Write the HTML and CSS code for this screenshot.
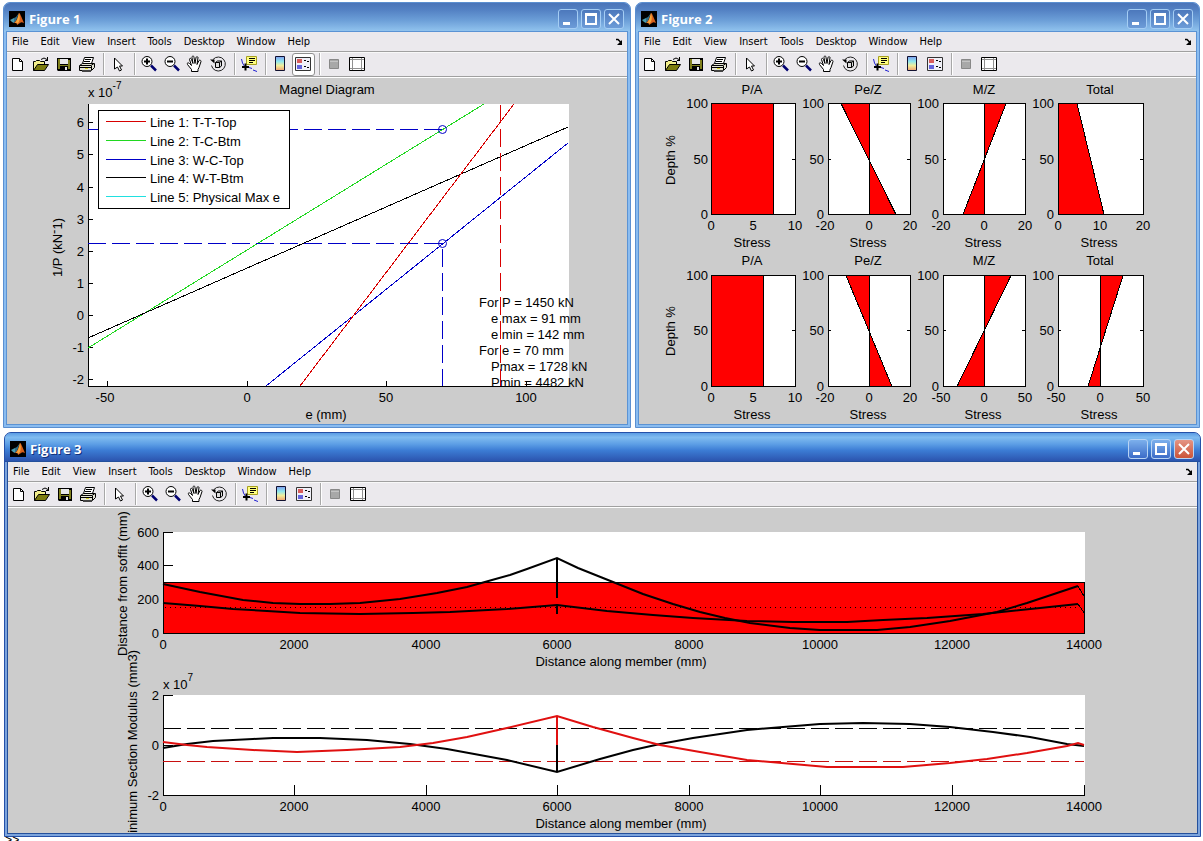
FILE: index.html
```html
<!DOCTYPE html>
<html lang="en">
<head>
  <meta charset="UTF-8">
  <meta name="viewport" content="width=device-width, initial-scale=1.0">
  <title>Figures</title>
  <link rel="stylesheet" href="styles.css">
</head>
<body>
  <!-- shared icons -->
  <svg class="defs" width="0" height="0" aria-hidden="true">
    <linearGradient id="jet" x1="0" y1="0" x2="0" y2="1">
      <stop offset="0" stop-color="#7d9cf0"/><stop offset="0.35" stop-color="#8fe6ee"/>
      <stop offset="0.65" stop-color="#f2ee9a"/><stop offset="1" stop-color="#f0a070"/>
    </linearGradient>
    <symbol id="i-logo" viewBox="0 0 16 16">
      <path d="M0 0h16v16H0z" fill="#000"/>
      <path d="M1 9l4-2 2 1-2 4-2-1z" fill="#4a9cb0"/>
      <path d="M5 7l2-1 3-4-3 8-2 2z" fill="#2f6f8a"/>
      <path d="M10 2c1 0 2 3 5 10-2-1-3-1-4 0l-3 2c0-2-1-2-3-2 3-2 4-7 5-10z" fill="#d8601c"/>
      <path d="M10 2c1 3 1 6 0 9l-2 2c0-2-1-1-2-1 2-2 3-6 4-10z" fill="#f6a83c"/>
    </symbol>
    <symbol id="i-new" viewBox="0 0 20 20">
      <path d="M4.500 4.500h7l3 3v9h-10z" fill="#fff" stroke="#000"/>
      <path d="M11.500 4.500v3h3" fill="none" stroke="#000"/>
    </symbol>
    <symbol id="i-open" viewBox="0 0 20 20">
      <path d="M2.500 16.500v-9h2l1-1h3l1 1h4v3" fill="#f4f08c" stroke="#000"/>
      <path d="M2.500 16.500l4-6h11l-4 6z" fill="#7c7c10" stroke="#000"/>
      <path d="M10 5.500q3-3 6 0M14 6.500h3M16.500 3v4" fill="none" stroke="#000"/>
    </symbol>
    <symbol id="i-save" viewBox="0 0 20 20">
      <path d="M3 4h14v13H4l-1-1z" fill="#000"/>
      <path d="M4 5h2v10H4zM14 6h2v9h-2zM6 11h8v1H6z" fill="#80801c"/>
      <path d="M6 5h8v5H6z" fill="#e8e8e8"/>
      <path d="M11 13h2v3h-2z" fill="#e8e8e8"/>
    </symbol>
    <symbol id="i-print" viewBox="0 0 20 20">
      <path d="M5.500 9.500l2-6h9l-2 6z" fill="#fff" stroke="#000"/>
      <path d="M8 5.500h6M7 7.500h6" stroke="#000"/>
      <path d="M2.500 11.500l3-2h12v4l-3 3h-12z" fill="#e4e4d4" stroke="#000"/>
      <path d="M3 11.500h11l3-2M14.500 12v4M3 13.500h11" fill="none" stroke="#000"/>
      <path d="M8 14h3v1H8z" fill="#d8d020"/>
      <path d="M5 16h9v2H5z" fill="#444"/>
    </symbol>
    <symbol id="i-arrow" viewBox="0 0 20 20">
      <path d="M6.500 4v11l3-2 2 4 2-1-2-4h3z" fill="#fff" stroke="#000"/>
    </symbol>
    <symbol id="i-zoomin" viewBox="0 0 20 20">
      <circle cx="8" cy="7.500" r="5" fill="#fff" stroke="#000"/>
      <path d="M5 7.500h6M8 4.500v6" stroke="#000" stroke-width="2"/>
      <path d="M12 11.500l5 5" stroke="#000070" stroke-width="2.500"/>
    </symbol>
    <symbol id="i-zoomout" viewBox="0 0 20 20">
      <circle cx="8" cy="7.500" r="5" fill="#fff" stroke="#000"/>
      <path d="M5 7.500h6" stroke="#000" stroke-width="2"/>
      <path d="M12 11.500l5 5" stroke="#000070" stroke-width="2.500"/>
    </symbol>
    <symbol id="i-pan" viewBox="0 0 20 20">
      <path d="M6.500 17.500v-2l-4-5c-1-2 1-2 2-1l2 2-2-6c0-2 2-1 2 0l1.500 4-1-6c0-2 2-2 2 0l1 6 1-6c0-1 2-1 2 0l-1 7 2-4c1-1 2 0 2 1l-2 6-1 2v2z" fill="#fff" stroke="#000"/>
    </symbol>
    <symbol id="i-rotate" viewBox="0 0 20 20">
      <path d="M5 5.500a7 7 0 1 1-1.500 6" fill="none" stroke="#222"/>
      <path d="M2 5.500h4.500v4z" fill="#000"/>
      <path d="M7.500 8.500l2-1.500h4v5l-2 1.500h-4z" fill="#ddd" stroke="#000"/>
      <path d="M7.500 8.500h4v5M11.500 8.500l2-1.500" fill="none" stroke="#000"/>
    </symbol>
    <symbol id="i-datatip" viewBox="0 0 20 20">
      <path d="M7.500 2.500h10v8h-10z" fill="#ffff80" stroke="#a8a020"/>
      <path d="M10 4.500h6M10 6.500h6M10 8.500h4" stroke="#000"/>
      <path d="M2.500 5l1 4 3 5M10 13.500l3 1M14 16l4 1.500" fill="none" stroke="#2020d0"/>
      <path d="M3 13h7M6.500 9.500v7" stroke="#000" stroke-width="2"/>
    </symbol>
    <symbol id="i-colorbar" viewBox="0 0 20 20">
      <path d="M5.500 2.500h9v14h-9z" fill="url(#jet)" stroke="#101030"/>
    </symbol>
    <symbol id="i-legend" viewBox="0 0 20 20">
      <path d="M2.500 3.500h15v13h-15z" fill="#f0f0f8" stroke="#333"/>
      <path d="M4 5h5v4H4z" fill="#d85c5c"/>
      <path d="M4 11h5v4H4z" fill="#6464dc"/>
      <path d="M11 6.500h2M14 7.500h2M11 12.500h2M14 13.500h2" stroke="#000"/>
    </symbol>
    <symbol id="i-hide" viewBox="0 0 20 20">
      <path d="M5.500 5.500h9v9h-9z" fill="#a8a8a8" stroke="#888"/>
      <path d="M6 7.500h8" stroke="#c4c4c4"/>
    </symbol>
    <symbol id="i-dock" viewBox="0 0 20 20">
      <path d="M2.500 3.500h15v13h-15z" fill="#fff" stroke="#000"/>
      <path d="M3 5.500h14M3 14.500h14M5.500 4v12M14.500 4v12" stroke="#909090"/>
    </symbol>
    <symbol id="i-undock" viewBox="0 0 8 8">
      <path d="M1 1.500h2l3 3" fill="none" stroke="#000" stroke-width="1.500"/>
      <path d="M7 2v5H2z" fill="#000"/>
    </symbol>
    <symbol id="i-min" viewBox="0 0 18 18"><path d="M4 12h7v3H4z" fill="#fff"/></symbol>
    <symbol id="i-max" viewBox="0 0 18 18"><path d="M3 3h12v12H3zM5 6v7h8V6z" fill="#fff" fill-rule="evenodd"/></symbol>
    <symbol id="i-close" viewBox="0 0 18 18"><path d="M4 4l10 10M14 4L4 14" stroke="#fff" stroke-width="2"/></symbol>
  </svg>

  <template id="controls">
    <div class="controls">
      <button aria-label="Minimize"><svg><use href="#i-min"/></svg></button>
      <button aria-label="Maximize"><svg><use href="#i-max"/></svg></button>
      <button class="close" aria-label="Close"><svg><use href="#i-close"/></svg></button>
    </div>
  </template>

  <template id="bars">
    <nav class="menubar">
      <button>File</button><button>Edit</button><button>View</button><button>Insert</button><button>Tools</button><button>Desktop</button><button>Window</button><button>Help</button>
      <button class="undock" aria-label="Dock figure"><svg><use href="#i-undock"/></svg></button>
    </nav>
    <div class="toolbar">
      <button aria-label="New figure"><svg><use href="#i-new"/></svg></button>
      <button aria-label="Open file"><svg><use href="#i-open"/></svg></button>
      <button aria-label="Save figure"><svg><use href="#i-save"/></svg></button>
      <button aria-label="Print figure"><svg><use href="#i-print"/></svg></button>
      <span class="sep"></span>
      <button aria-label="Edit plot"><svg><use href="#i-arrow"/></svg></button>
      <span class="sep"></span>
      <button aria-label="Zoom in"><svg><use href="#i-zoomin"/></svg></button>
      <button aria-label="Zoom out"><svg><use href="#i-zoomout"/></svg></button>
      <button aria-label="Pan"><svg><use href="#i-pan"/></svg></button>
      <button aria-label="Rotate 3D"><svg><use href="#i-rotate"/></svg></button>
      <span class="sep"></span>
      <button aria-label="Data cursor"><svg><use href="#i-datatip"/></svg></button>
      <span class="sep"></span>
      <button aria-label="Insert colorbar"><svg><use href="#i-colorbar"/></svg></button>
      <button class="legend-btn" aria-label="Insert legend"><svg><use href="#i-legend"/></svg></button>
      <span class="sep"></span>
      <button aria-label="Hide plot tools" disabled><svg><use href="#i-hide"/></svg></button>
      <button aria-label="Show plot tools"><svg><use href="#i-dock"/></svg></button>
    </div>
  </template>

  <main class="desktop">
    <div class="row">
      <section class="window has-legend">
        <header class="titlebar"><svg class="logo"><use href="#i-logo"/></svg><h1>Figure 1</h1></header>
        <div class="client">
          <svg class="plot" viewBox="7 78 620 346" role="img" aria-label="Magnel Diagram">
            <path class="area" d="M88 104h481v282H88z"/>
            <text class="mid" x="327" y="94">Magnel Diagram</text>
            <text x="88" y="97">x 10<tspan class="sup" dy="-8">-7</tspan></text>
            <text class="mid" x="326" y="419">e (mm)</text>
            <text transform="translate(62 277) rotate(-90)">1/P (kN<tspan dy="-4">-</tspan><tspan dy="4">1)</tspan></text>
            <g class="end">
              <text x="84" y="127">6</text><text x="84" y="159">5</text><text x="84" y="192">4</text>
              <text x="84" y="224">3</text><text x="84" y="256">2</text><text x="84" y="288">1</text>
              <text x="84" y="320">0</text><text x="84" y="352">-1</text><text x="84" y="384">-2</text>
            </g>
            <g class="mid">
              <text x="105" y="402">-50</text><text x="247" y="402">0</text>
              <text x="386" y="402">50</text><text x="526" y="402">100</text>
            </g>
            <path class="line" d="M88.500 104v282.500H569M88 122.500h5M88 154.500h5M88 187.500h5M88 219.500h5M88 251.500h5M88 283.500h5M88 315.500h5M88 347.500h5M88 379.500h5M107.500 386v-5M247.500 386v-5M386.500 386v-5M526.500 386v-5"/>
            <path class="line green" d="M88 348L484 104"/>
            <path class="line" d="M88 338L568 127"/>
            <path class="line blue" d="M266 386L568 143"/>
            <path class="line red" d="M300 386L514 104"/>
            <path class="line blue dash" d="M88 129.500h354M88 243.500h354"/>
            <path class="line blue dash" d="M442.500 249v137"/>
            <g class="ring"><circle cx="442.500" cy="129.500" r="4"/><circle cx="442.500" cy="243.500" r="4"/></g>
            <g>
              <text x="479" y="307">For P = 1450 kN</text>
              <text x="491" y="323">e max = 91 mm</text>
              <text x="491" y="339">e min = 142 mm</text>
              <text x="479" y="355">For e = 70 mm</text>
              <text x="491" y="371">Pmax = 1728 kN</text>
              <text x="491" y="387">Pmin = 4482 kN</text>
            </g>
            <path class="line red dash" d="M500.500 105v281"/>
            <path class="area line" d="M98.500 110.500h191v98h-191z"/>
            <path class="line red" d="M106 121.500h40"/><text x="150" y="127">Line 1: T-T-Top</text>
            <path class="line green" d="M106 140.500h40"/><text x="150" y="146">Line 2: T-C-Btm</text>
            <path class="line blue" d="M106 159.500h40"/><text x="150" y="165">Line 3: W-C-Top</text>
            <path class="line" d="M106 177.500h40"/><text x="150" y="183">Line 4: W-T-Btm</text>
            <path class="line cyan" d="M106 196.500h40"/><text x="150" y="202">Line 5: Physical Max e</text>
          </svg>
        </div>
      </section>

      <section class="window">
        <header class="titlebar"><svg class="logo"><use href="#i-logo"/></svg><h1>Figure 2</h1></header>
        <div class="client">
          <svg class="plot" viewBox="639 78 557 346" role="img" aria-label="Stress distributions">
            <text class="mid" transform="translate(675 160) rotate(-90)">Depth %</text>
            <text class="mid" transform="translate(675 331) rotate(-90)">Depth %</text>

            <!-- first row -->
            <path class="area" d="M711 103h84v111h-84zM828 103h82v111h-82zM943 103h82v111h-82zM1058 103h85v111h-85z"/>
            <path class="fill" d="M711.500 103.500h62v111h-62z"/>
            <path class="fill" d="M869.500 103.500H841L896 214.500h-26.500z"/>
            <path class="fill" d="M984.500 103.500H1006L963 214.500h21.500z"/>
            <path class="fill" d="M1058.500 103.500H1077L1104 214.500h-45.500z"/>
            <path class="line" d="M711.500 103.500h84v111h-84zM828.500 103.500h82v111h-82zM943.500 103.500h82v111h-82zM1058.500 103.500h85v111h-85z"/>
            <path class="line" d="M795 159.500h-3M828 159.500h3M910 159.500h-3M943 159.500h3M1025 159.500h-3M1143 159.500h-3"/>
            <g class="mid">
              <text x="752" y="94">P/A</text><text x="868" y="94">Pe/Z</text><text x="984" y="94">M/Z</text><text x="1100" y="94">Total</text>
              <text x="711" y="230">0</text><text x="753" y="230">5</text><text x="795" y="230">10</text>
              <text x="825" y="230">-20</text><text x="869" y="230">0</text><text x="910" y="230">20</text>
              <text x="941" y="230">-20</text><text x="984" y="230">0</text><text x="1025" y="230">20</text>
              <text x="1058" y="230">0</text><text x="1100" y="230">10</text><text x="1143" y="230">20</text>
              <text x="752" y="247">Stress</text><text x="868" y="247">Stress</text><text x="983" y="247">Stress</text><text x="1099" y="247">Stress</text>
            </g>
            <g class="end">
              <text x="708" y="108">100</text><text x="708" y="164">50</text><text x="708" y="219">0</text>
              <text x="824" y="108">100</text><text x="824" y="164">50</text><text x="824" y="219">0</text>
              <text x="939" y="108">100</text><text x="939" y="164">50</text><text x="939" y="219">0</text>
              <text x="1054" y="108">100</text><text x="1054" y="164">50</text><text x="1054" y="219">0</text>
            </g>

            <!-- second row -->
            <path class="area" d="M711 275h84v111h-84zM828 275h82v111h-82zM943 275h82v111h-82zM1058 275h85v111h-85z"/>
            <path class="fill" d="M711.500 275.500h52v111h-52z"/>
            <path class="fill" d="M869.500 275.500H846L892 386.500h-22.500z"/>
            <path class="fill" d="M984.500 275.500H1011L957 386.500h27.500z"/>
            <path class="fill" d="M1100.500 275.500H1123L1088 386.500h12.500z"/>
            <path class="line" d="M711.500 275.500h84v111h-84zM828.500 275.500h82v111h-82zM943.500 275.500h82v111h-82zM1058.500 275.500h85v111h-85z"/>
            <path class="line" d="M795 330.500h-3M828 330.500h3M910 330.500h-3M943 330.500h3M1025 330.500h-3M1058 330.500h3M1143 330.500h-3"/>
            <g class="mid">
              <text x="752" y="265">P/A</text><text x="868" y="265">Pe/Z</text><text x="984" y="265">M/Z</text><text x="1100" y="265">Total</text>
              <text x="711" y="402">0</text><text x="753" y="402">5</text><text x="795" y="402">10</text>
              <text x="825" y="402">-20</text><text x="869" y="402">0</text><text x="910" y="402">20</text>
              <text x="941" y="402">-50</text><text x="984" y="402">0</text><text x="1025" y="402">50</text>
              <text x="1056" y="402">-50</text><text x="1100" y="402">0</text><text x="1143" y="402">50</text>
              <text x="752" y="419">Stress</text><text x="868" y="419">Stress</text><text x="983" y="419">Stress</text><text x="1099" y="419">Stress</text>
            </g>
            <g class="end">
              <text x="708" y="280">100</text><text x="708" y="335">50</text><text x="708" y="391">0</text>
              <text x="824" y="280">100</text><text x="824" y="335">50</text><text x="824" y="391">0</text>
              <text x="939" y="280">100</text><text x="939" y="335">50</text><text x="939" y="391">0</text>
              <text x="1054" y="280">100</text><text x="1054" y="335">50</text><text x="1054" y="391">0</text>
            </g>
          </svg>
        </div>
      </section>
    </div>

    <div class="row row-wide">
      <section class="window active">
        <header class="titlebar"><svg class="logo"><use href="#i-logo"/></svg><h1>Figure 3</h1></header>
        <div class="client">
          <svg class="plot" viewBox="8 508 1189 325" role="img" aria-label="Cable profile and section modulus">
            <!-- cable profile -->
            <path class="area" d="M163 532h922v101H163z"/>
            <path class="fill" d="M163.500 582.500h921v50.500h-921z"/>
            <path class="line dot" d="M165 607.500h919"/>
            <path class="line" d="M163.500 532v101.500H1085M163 532.500h10M163 565.500h10"/>
            <path class="curve" d="M163 584L200 592 243 600 273 603 300 604 330 604 360 603 400 599 437 593 467 587 492 580 510 575 527 569 557 558 578 568 613 582 643 594 673 604 700 612 725 618 750 623 790 628 820 630 877 630 910 627 950 621 997 612 1027 603 1078 586"/>
            <path class="curve" d="M163 603L200 606 233 609 267 611 300 613 360 614 413 613 450 612 507 609 557 605 607 611 653 615 693 618 747 621 793 622 847 622 883 620 927 618 983 614 1040 608 1078 604"/>
            <path class="curve" d="M557 558v40M557 605v9"/>
            <path class="line" d="M1078 586l7 12M1078 604l7 10"/>
            <text class="mid" x="621" y="666">Distance along member (mm)</text>
            <text transform="translate(127 656) rotate(-90)">Distance from soffit (mm)</text>
            <g class="end">
              <text x="159" y="537">600</text><text x="159" y="570">400</text><text x="159" y="604">200</text><text x="159" y="638">0</text>
            </g>
            <g class="mid">
              <text x="163" y="649">0</text><text x="294" y="649">2000</text><text x="426" y="649">4000</text><text x="557" y="649">6000</text>
              <text x="689" y="649">8000</text><text x="820" y="649">10000</text><text x="952" y="649">12000</text><text x="1084" y="649">14000</text>
            </g>

            <!-- section modulus -->
            <path class="area" d="M163 695h922v100H163z"/>
            <path class="line" d="M163.500 695v100.500H1085M163 695.500h10M163 745.500h10M294.500 795v-10M426.500 795v-10M557.500 795v-10M689.500 795v-10M820.500 795v-10M952.500 795v-10M1084.500 795v-10"/>
            <path class="line dash" d="M163 728.500h921"/>
            <path class="line brick dash" d="M163 761.500h921"/>
            <path class="curve" d="M163 748L187 744 213 741 253 739 273 738 320 738 367 740 410 744 447 749 507 760 557 772 600 759 633 750 660 744 693 738 747 730 783 727 820 724 863 723 910 724 950 727 993 732 1030 737 1067 744 1084 746"/>
            <path class="curve curve-red" d="M163 742L187 745 207 747 253 750 297 752 347 750 400 747 433 743 467 737 507 728 557 716 593 727 633 738 660 745 700 752 747 760 793 764 827 767 903 767 950 763 987 759 1027 753 1067 746 1078 743 1084 745"/>
            <path class="curve" d="M557 745v27"/>
            <path class="curve curve-red" d="M557 716v29"/>
            <text x="163" y="689">x 10<tspan class="sup" dy="-8">7</tspan></text>
            <text class="mid" x="621" y="828">Distance along member (mm)</text>
            <text class="end" transform="translate(137 650) rotate(-90)">Minimum Section Modulus (mm3)</text>
            <g class="end">
              <text x="159" y="700">2</text><text x="159" y="750">0</text><text x="159" y="800">-2</text>
            </g>
            <g class="mid">
              <text x="163" y="811">0</text><text x="294" y="811">2000</text><text x="426" y="811">4000</text><text x="557" y="811">6000</text>
              <text x="689" y="811">8000</text><text x="820" y="811">10000</text><text x="952" y="811">12000</text><text x="1084" y="811">14000</text>
            </g>
          </svg>
        </div>
      </section>
    </div>
    <p class="prompt">&gt;&gt;</p>
  </main>

  <script>
    const controls = document.getElementById('controls');
    const bars = document.getElementById('bars');

    // Every figure window gets the same buttons, menus and toolbar
    document.querySelectorAll('.window').forEach(win => {
      win.querySelector('.titlebar').append(controls.content.cloneNode(true));
      win.querySelector('.client').prepend(bars.content.cloneNode(true));
      win.querySelector('.legend-btn').setAttribute('aria-pressed', win.classList.contains('has-legend'));
    });
  </script>
</body>
</html>
```

FILE: styles.css
```css
* {
  box-sizing: border-box;
}
body {
  margin: 0;
  background: #fff;
  font-family: "DejaVu Sans Condensed", "DejaVu Sans", sans-serif;
  font-size: 11px;
  color: #000;
}
button {
  padding: 0;
  border: 0;
  background: none;
  font: inherit;
  color: inherit;
}
svg {
  display: block;
}
.defs {
  position: absolute;
}
.desktop {
  height: 100vh;
  overflow: hidden;
}
.row {
  display: grid;
  grid-template-columns: minmax(0, 628fr) minmax(0, 565fr);
  gap: 4px;
  padding: 2px 3px 4px;
}
.row-wide {
  grid-template-columns: minmax(0, 1fr);
  padding: 0 2px 0 4px;
}

/* window frame */
.window {
  padding: 0 3px 3px;
  border: 1px solid #5b8fd0;
  border-radius: 7px 7px 0 0;
  background: #8abcf0;
}
.titlebar {
  display: flex;
  align-items: center;
  gap: 4px;
  height: 29px;
  margin: 0 -3px;
  padding: 2px 6px 0 5px;
  border-radius: 6px 6px 0 0;
  background: linear-gradient(#4a74b8, #5482c4 25%, #6c9fd8 60%, #94c6f0);
}
.logo {
  width: 16px;
  height: 16px;
}
.titlebar h1 {
  flex: 1;
  margin: 0;
  font-family: "Open Sans", sans-serif;
  font-size: 13px;
  font-weight: 700;
  line-height: 16px;
  color: #fff;
}
.controls {
  display: flex;
  gap: 3px;
}
.controls button {
  width: 20px;
  height: 20px;
  border: 1px solid #a4cdf4;
  border-radius: 3px;
  background: linear-gradient(#4c78bc, #6c9cd8);
}
.controls svg {
  width: 18px;
  height: 18px;
}
.client {
  background: #ccc;
  box-shadow: 0 0 0 1px #5b93d4;
}
.active {
  border-color: #2450a8;
  background: #7ca4dc;
}
.active .titlebar {
  background: linear-gradient(#5a9ce4, #80bcf0 15%, #5a9ce4 40%, #3c7cd4 60%, #2c56b0 95%, #2048a0);
}
.active .titlebar h1 {
  text-shadow: 1px 1px #10307c;
}
.active .client {
  box-shadow: 0 0 0 1px #24509c;
}
.active .controls button {
  border-color: #b8d4f4;
  background: linear-gradient(#7cb0ec, #3c6cc8);
}
.active .controls .close {
  background: linear-gradient(#e49484, #cc5438);
}

/* menus and toolbar */
.menubar {
  display: flex;
  align-items: center;
  height: 20px;
  padding: 0 4px 0 0;
  border-bottom: 1px solid #a0a0a0;
  background: #ebe9ed;
}
.menubar button {
  padding: 0 7px 0 5px;
  line-height: 18px;
}
.menubar .undock {
  margin-left: auto;
  padding: 0;
}
.undock svg {
  width: 8px;
  height: 8px;
}
.toolbar {
  display: flex;
  align-items: center;
  height: 26px;
  padding-bottom: 1px;
  border-bottom: 1px solid #fff;
  background: #ebe9ed;
  box-shadow: inset 0 1px #f8f8f8, inset 0 -1px #a0a0a0;
}
.toolbar button {
  display: grid;
  place-items: center;
  width: 23px;
  height: 23px;
  padding-right: 1px;
  border: 1px solid transparent;
  border-radius: 3px;
}
.toolbar button[aria-pressed="true"] {
  border-color: #909090;
  background: #fff;
}
.toolbar svg {
  width: 20px;
  height: 20px;
}
.sep {
  width: 2px;
  height: 22px;
  margin: 0 2px 0 4px;
  border-left: 1px solid #a8a8a8;
  border-right: 1px solid #fff;
}

/* plots */
.plot {
  width: 100%;
  height: auto;
  overflow: hidden;
  font-family: "Liberation Sans", Arial, sans-serif;
  font-size: 13px;
}
.mid {
  text-anchor: middle;
}
.end {
  text-anchor: end;
}
.sup {
  font-size: 10px;
}
.area {
  fill: #fff;
}
.line {
  fill: none;
  stroke: #000;
  shape-rendering: crispEdges;
}
.area.line {
  fill: #fff;
}
.fill {
  fill: #f00;
  stroke: #000;
  shape-rendering: crispEdges;
}
.red {
  stroke: #d80000;
}
.brick {
  stroke: #c81010;
}
.green {
  stroke: #20d820;
}
.blue {
  stroke: #0000c8;
}
.cyan {
  stroke: #20e0e0;
}
.dash {
  stroke-dasharray: 18 6;
}
.dot {
  stroke-dasharray: 1 4;
}
.ring {
  fill: none;
  stroke: #0000c8;
}
.curve {
  fill: none;
  stroke: #000;
  stroke-width: 2;
}
.curve-red {
  stroke: #e01010;
}
.prompt {
  margin: 0;
  padding-left: 5px;
  font-family: "Liberation Mono", monospace;
  font-size: 12px;
  line-height: 8px;
}
```
